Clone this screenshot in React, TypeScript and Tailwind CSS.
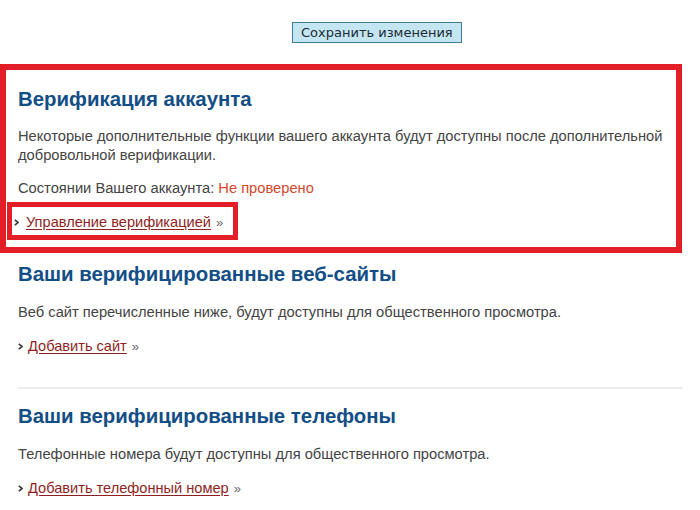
import React from "react";

const Chevron = () => (
  <svg width="5" height="7" viewBox="0 0 5 7" className="shrink-0">
    <path d="M0.8 0.8 L4 3.5 L0.8 6.2" fill="none" stroke="#333" strokeWidth="1.6" />
  </svg>
);

const LinkRow = ({ text, gap = "ml-[7px]" }: { text: string; gap?: string }) => (
  <div className="flex items-center h-[19px] text-[14.6px] leading-[19px]">
    <Chevron />
    <a href="#" className={`${gap} text-[#8e1f22] underline underline-offset-[2px] decoration-[#8e1f22]`}>
      {text}
    </a>
    <span className="ml-[5px] text-[#666] text-[13px]">»</span>
  </div>
);

export default function App() {
  return (
    <div className="w-[700px] h-[510px] bg-white overflow-hidden [font-family:'Liberation_Sans',Arial,sans-serif] text-[#444]">
      <div className="pt-[22px] pl-[292px]">
        <button className="block h-[21px] px-[8px] border border-[#3d7f93] bg-[#c3e6f2] text-[#1d2b33] text-[13px] leading-[19px] [font-family:'DejaVu_Sans',Tahoma,sans-serif]">
          Сохранить изменения
        </button>
      </div>

      <section className="mt-[21px] w-[682px] border-[6px] border-[#e31e26] pb-[7px]">
        <div className="pl-[12px] pt-[18px]">
          <h2 className="text-[20.4px] leading-[22px] font-bold text-[#134e86]">Верификация аккаунта</h2>
          <p className="mt-[17px] text-[14.7px] leading-[19px]">
            Некоторые дополнительные функции вашего аккаунта будут доступны после дополнительной
            <br />
            добровольной верификации.
          </p>
          <p className="mt-[14px] text-[14.7px] leading-[19px]">
            Состоянии Вашего аккаунта: <span className="text-[#d2492c]">Не проверено</span>
          </p>
        </div>
        <div className="mt-[4px] ml-[1px] inline-flex items-center h-[38px] border-[5px] border-[#e31e26] pl-[2px] pr-[10px] pt-[3px]">
          <LinkRow text="Управление верификацией" />
        </div>
      </section>

      <section className="pl-[18px] pt-[10px]">
        <h2 className="text-[20.4px] leading-[22px] font-bold text-[#134e86]">Ваши верифицированные веб-сайты</h2>
        <p className="mt-[18px] text-[14.7px] leading-[19px]">
          Веб сайт перечисленные ниже, будут доступны для общественного просмотра.
        </p>
        <div className="mt-[15px]">
          <LinkRow text="Добавить сайт" gap="ml-[5px]" />
        </div>
        <div className="mt-[31px] w-[665px] h-[2px] bg-[#ececec]" />
      </section>

      <section className="pl-[18px] pt-[16px]">
        <h2 className="text-[20.4px] leading-[22px] font-bold text-[#134e86]">Ваши верифицированные телефоны</h2>
        <p className="mt-[18px] text-[14.7px] leading-[19px]">
          Телефонные номера будут доступны для общественного просмотра.
        </p>
        <div className="mt-[15px]">
          <LinkRow text="Добавить телефонный номер" gap="ml-[5px]" />
        </div>
      </section>
    </div>
  );
}
